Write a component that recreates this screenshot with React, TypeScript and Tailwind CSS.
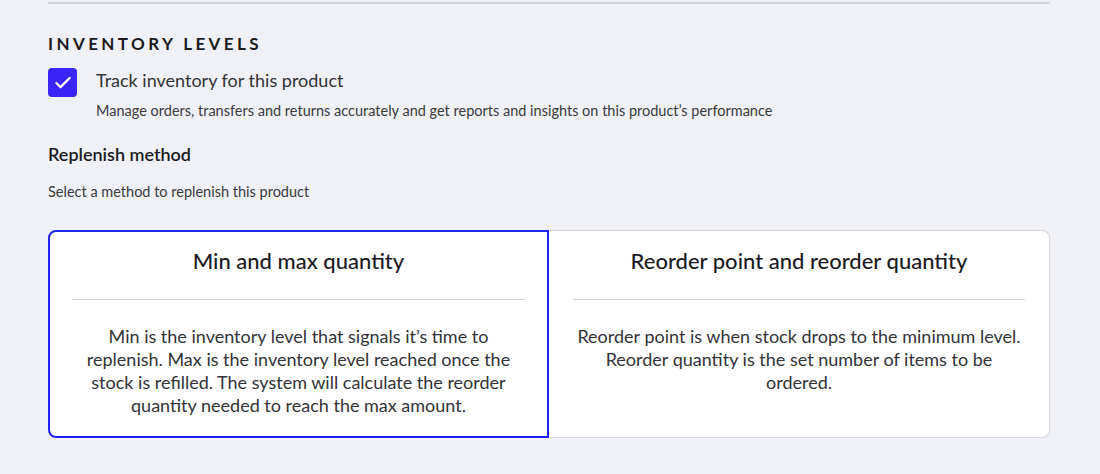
import { Check } from 'lucide-react'

const methods = [
  {
    title: 'Min and max quantity',
    body: 'Min is the inventory level that signals it’s time to replenish. Max is the inventory level reached once the stock is refilled. The system will calculate the reorder quantity needed to reach the max amount.',
    selected: true,
  },
  {
    title: 'Reorder point and reorder quantity',
    body: 'Reorder point is when stock drops to the minimum level. Reorder quantity is the set number of items to be ordered.',
    selected: false,
  },
]

export default function App() {
  return (
    <div className="min-h-[474px] bg-[#f0f1f6] pl-12 pr-[50px] pt-[2px] font-['Lato',sans-serif] text-[#2b2b2e]">
      <div className="h-[2px] bg-[#d5d6dc]" />

      <h2 className="mt-[30px] text-[17px] font-bold uppercase leading-5 tracking-[0.2em] text-[#1b1b1f]">
        Inventory levels
      </h2>

      <div className="mt-[13px] flex gap-[19px]">
        <div className="mt-[1px] flex h-[29px] w-[29px] shrink-0 items-center justify-center rounded-[4px] bg-[#3b24f6]">
          <Check className="h-[20px] w-[20px] text-white" strokeWidth={2.75} />
        </div>
        <div>
          <p className="mt-[1px] text-[18px] leading-6 text-[#333338]">Track inventory for this product</p>
          <p className="mt-[10px] text-[14.5px] leading-[18px] text-[#3a3a3f]">
            Manage orders, transfers and returns accurately and get reports and insights on this product’s performance
          </p>
        </div>
      </div>

      <h3 className="mt-[22px] text-[18px] font-semibold leading-6 text-[#1b1b1f]">Replenish method</h3>
      <p className="mt-[17px] text-[14.5px] leading-[18px] text-[#3a3a3f]">Select a method to replenish this product</p>

      <div className="mt-[29px] grid grid-cols-2">
        {methods.map((m) =>
          m.selected ? (
            <div
              key={m.title}
              className="h-[208px] rounded-l-lg border-2 border-[#1f24ff] bg-white px-[22px] pt-[13px]"
            >
              <CardBody title={m.title} body={m.body} />
            </div>
          ) : (
            <div
              key={m.title}
              className="h-[208px] rounded-r-lg border border-l-0 border-[#d6d7dc] bg-white px-[24px] pt-[14px]"
            >
              <CardBody title={m.title} body={m.body} />
            </div>
          ),
        )}
      </div>
    </div>
  )
}

function CardBody({ title, body }: { title: string; body: string }) {
  return (
    <div className="flex flex-col items-center text-center">
      <h4 className="mt-[2px] text-[22px] font-medium leading-7 text-[#1b1b1f]">{title}</h4>
      <div className="mt-[24px] h-px w-full bg-[#d2d3d8]" />
      <p className="mt-[25px] text-[18px] leading-[23px] text-[#333338]">{body}</p>
    </div>
  )
}
